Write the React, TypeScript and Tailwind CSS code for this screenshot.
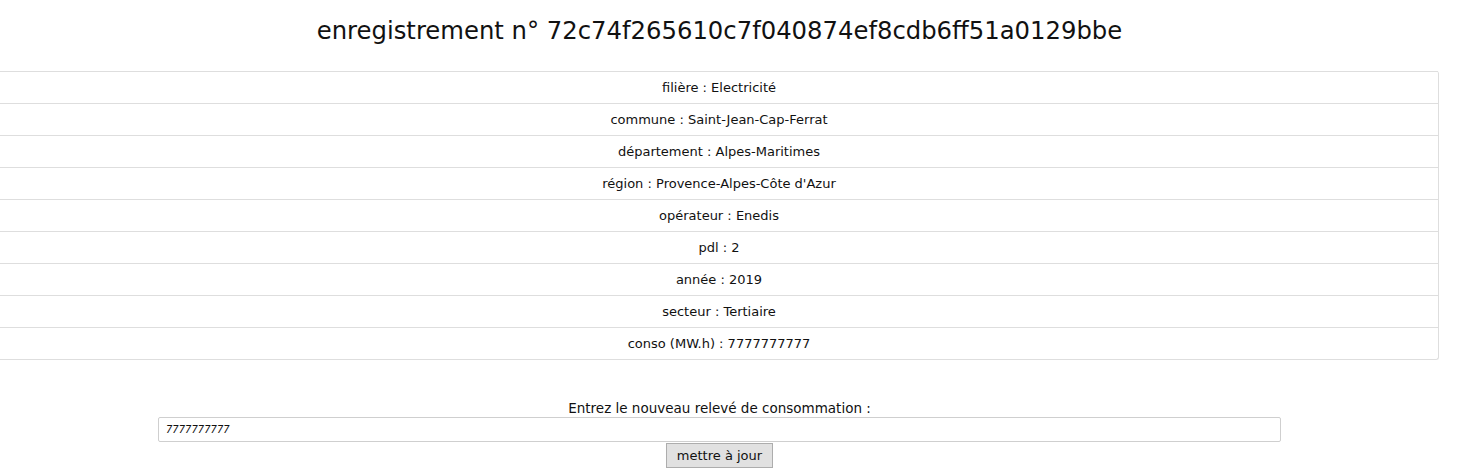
const fields = [
  ["filière", "Electricité"],
  ["commune", "Saint-Jean-Cap-Ferrat"],
  ["département", "Alpes-Maritimes"],
  ["région", "Provence-Alpes-Côte d'Azur"],
  ["opérateur", "Enedis"],
  ["pdl", "2"],
  ["année", "2019"],
  ["secteur", "Tertiaire"],
  ["conso (MW.h)", "7777777777"],
];

export default function App() {
  return (
    <div className="w-[1439px] bg-white text-[#111] font-['DejaVu_Sans',sans-serif]">
      <h1 className="pt-[15px] h-[71px] text-center text-[24.3px] leading-[31px]">
        enregistrement n° 72c74f265610c7f040874ef8cdb6ff51a0129bbe
      </h1>
      <ul className="ml-[-1px] border-x border-b border-[#dedede] rounded-r-[3px]">
        {fields.map(([k, v]) => (
          <li
            key={k}
            className="h-[32px] pt-[1px] flex items-center justify-center text-[13px] border-t border-[#dedede]"
          >
            {k} : {v}
          </li>
        ))}
      </ul>
      <form className="mt-[40px] flex flex-col items-center">
        <label className="text-[13.5px] leading-[16px]">
          Entrez le nouveau relevé de consommation :
        </label>
        <input
          defaultValue="7777777777"
          className="mt-[1px] w-[1123px] h-[25px] border border-[#cfcfcf] rounded-[2px] px-[7px] text-[10px] italic"
        />
        <button
          type="button"
          className="mt-[1px] h-[25px] px-[10px] bg-[#e1e1e1] border border-[#adadad] text-[13px]"
        >
          mettre à jour
        </button>
      </form>
    </div>
  );
}
